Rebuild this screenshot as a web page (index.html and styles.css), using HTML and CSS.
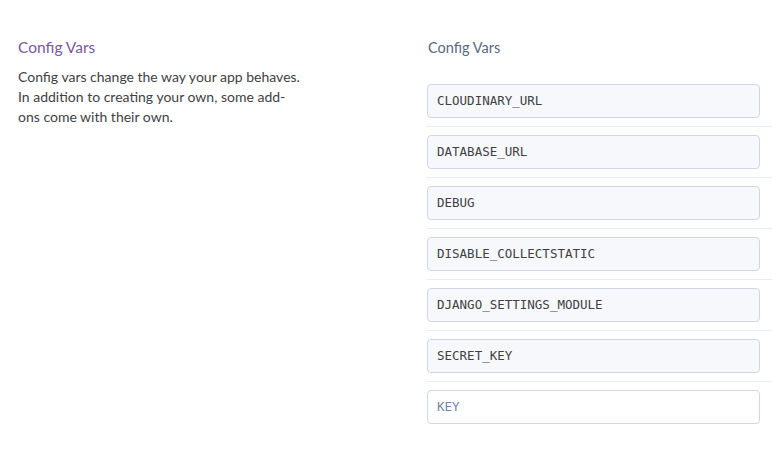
FILE: index.html
```html
<!DOCTYPE html>
<html>
<head>
<meta charset="utf-8">
<link rel="stylesheet" href="styles.css">
</head>
<body>
<div class="page">
  <section class="intro">
    <h2 class="intro-title">Config Vars</h2>
    <p class="intro-text">Config vars change the way your app behaves. In addition to creating your own, some add-ons come with their own.</p>
  </section>
  <section class="vars">
    <h3 class="vars-title">Config Vars</h3>
    <ul class="var-list">
      <li class="var-row"><div class="var-input">CLOUDINARY_URL</div></li>
      <li class="var-row"><div class="var-input">DATABASE_URL</div></li>
      <li class="var-row"><div class="var-input">DEBUG</div></li>
      <li class="var-row"><div class="var-input">DISABLE_COLLECTSTATIC</div></li>
      <li class="var-row"><div class="var-input">DJANGO_SETTINGS_MODULE</div></li>
      <li class="var-row"><div class="var-input">SECRET_KEY</div></li>
      <li class="var-row var-row-new"><div class="var-input var-input-new">KEY</div></li>
    </ul>
  </section>
</div>
</body>
</html>
```
FILE: styles.css
```css
html, body {
  margin: 0;
  padding: 0;
  background: #fff;
}
body {
  font-family: "Lato", "Open Sans", sans-serif;
  color: #3f3f44;
}
.page {
  display: flex;
  width: 772px;
}
.intro {
  width: 409px;
  padding: 37px 0 0 18px;
  box-sizing: content-box;
}
.intro-title {
  margin: 0;
  font-size: 15.5px;
  line-height: 20px;
  font-weight: 400;
  color: #79589f;
}
.intro-text {
  margin: 10px 0 0;
  width: 285px;
  font-size: 14px;
  line-height: 20px;
  color: #3f3f44;
}
.vars {
  flex: 1;
  padding-top: 38px;
}
.vars-title {
  margin: 0 0 0 1px;
  font-size: 14.5px;
  line-height: 20px;
  font-weight: 400;
  color: #596981;
}
.var-list {
  list-style: none;
  margin: 26px 0 0;
  padding: 0;
}
.var-row {
  padding: 8px 0;
  border-bottom: 1px solid #e8ecf3;
}
.var-row:first-child {
  padding-top: 0;
}
.var-row-new {
  border-bottom: none;
}
.var-input {
  width: 333px;
  height: 34px;
  box-sizing: border-box;
  border: 1px solid #cfd7e6;
  border-radius: 4px;
  background: #f7f8fb;
  padding: 0 9px;
  font-family: "DejaVu Sans Mono", monospace;
  font-size: 12.5px;
  line-height: 32px;
  color: #3f3f44;
}
.var-input-new {
  background: #fff;
  color: #7185a3;
}
```
